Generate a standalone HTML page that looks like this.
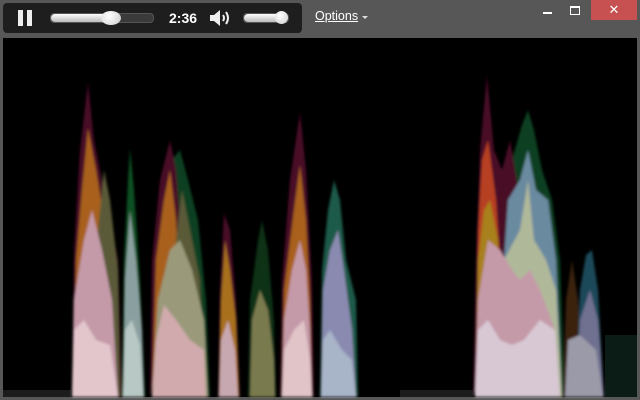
<!DOCTYPE html>
<html><head><style>
body{margin:0;width:640px;height:400px;background:#575757;overflow:hidden;font-family:"Liberation Sans",sans-serif;position:relative}
.bar{position:absolute;left:3px;top:3px;width:299px;height:30px;background:#1e1e1e;border-radius:4px}
.vid{position:absolute;left:3px;top:38px;width:634px;height:359px;background:#000}
.track{position:absolute;height:8px;border-radius:4px;background:#3a3a3a;border:1px solid #555}
.fill{position:absolute;left:0;top:0;height:8px;border-radius:4px;background:linear-gradient(#fff,#bbb)}
.thumb{position:absolute;border-radius:50%;background:radial-gradient(circle at 40% 35%,#fff,#ccc)}
</style></head><body>
<div class="bar">
 <div style="position:absolute;left:15px;top:7px;width:5px;height:16px;background:#eee"></div>
 <div style="position:absolute;left:24px;top:7px;width:5px;height:16px;background:#eee"></div>
 <div class="track" style="left:47px;top:10px;width:102px"><div class="fill" style="width:62px"></div></div>
 <div class="thumb" style="left:98px;top:8px;width:20px;height:14px"></div>
 <div style="position:absolute;left:166px;top:7px;color:#fff;font-weight:bold;font-size:14px">2:36</div>
 <svg style="position:absolute;left:205px;top:5px" width="26" height="20" viewBox="0 0 26 20">
  <path d="M2 7h4l6-5v16l-6-5H2z" fill="#eee"/>
  <path d="M15 7q2 3 0 6M18 4q4 6 0 12" stroke="#eee" stroke-width="2" fill="none"/>
 </svg>
 <div class="track" style="left:240px;top:10px;width:44px"><div class="fill" style="width:44px"></div></div>
 <div class="thumb" style="left:272px;top:8px;width:13px;height:13px"></div>
</div>
<div style="position:absolute;left:315px;top:9px;color:#fff;font-size:12.5px;text-decoration:underline">Options</div>
<div style="position:absolute;left:362px;top:16px;border:3px solid transparent;border-top:3px solid #ddd;border-bottom:0"></div>
<div style="position:absolute;left:543px;top:12px;width:9px;height:2px;background:#fff"></div>
<div style="position:absolute;left:570px;top:6px;width:8px;height:6px;border:1px solid #fff;border-top-width:2px"></div>
<div style="position:absolute;left:591px;top:0;width:46px;height:20px;background:#c75050;color:#fff;font-size:13px;text-align:center;line-height:20px">✕</div>
<div class="vid"></div>
<svg style="position:absolute;left:0;top:0" width="640" height="400">
 <defs><filter id="b"><feGaussianBlur stdDeviation="1.2"/></filter></defs>
 <rect x="3" y="390" width="68" height="7" fill="#1c1c1c"/>
 <rect x="400" y="390" width="73" height="7" fill="#1c1c1c"/>
 <rect x="605" y="335" width="32" height="62" fill="#0b1c16"/>
 <g filter="url(#b)">
 <!-- spike1 -->
 <polygon fill="#4a0828" points="72,397 74,250 80,150 88,82 94,140 104,190 118,260 122,397"/>
 <polygon fill="#a8601e" points="74,397 76,260 82,190 88,128 96,170 106,230 118,300 120,397"/>
 <polygon fill="#5a5a38" points="96,397 98,230 104,170 110,200 118,270 120,397"/>
 <polygon fill="#c49aa8" points="72,397 74,300 84,240 92,210 102,250 112,300 118,397"/>
 <polygon fill="#e2c6cc" points="72,397 74,330 84,320 96,340 110,345 118,397"/>
 <!-- spike2 -->
 <polygon fill="#0a5020" points="122,397 124,260 128,180 130,148 134,190 140,280 145,397"/>
 <polygon fill="#8aa0a0" points="123,397 125,280 130,210 136,260 142,330 144,397"/>
 <polygon fill="#b8c8c4" points="123,397 125,330 132,320 140,345 143,397"/>
 <!-- spike3 -->
 <polygon fill="#0a4020" points="165,300 172,160 180,150 188,180 198,220 206,300 210,397 160,397"/>
 <polygon fill="#4a0828" points="150,397 152,260 160,180 170,140 176,170 180,220 170,300"/>
 <polygon fill="#a8601e" points="152,397 156,260 164,200 170,170 176,220 180,300"/>
 <polygon fill="#5a5a38" points="174,397 176,240 182,190 190,230 200,280 204,397"/>
 <polygon fill="#9a9a7a" points="152,397 158,300 170,250 180,240 192,270 204,320 208,397"/>
 <polygon fill="#d0aaac" points="152,397 156,340 164,305 176,320 190,340 204,350 206,397"/>
 <!-- spike4 -->
 <polygon fill="#4a0828" points="218,397 220,290 224,213 230,230 236,300 240,397"/>
 <polygon fill="#a8701e" points="219,397 221,300 225,240 230,270 236,320 239,397"/>
 <polygon fill="#c8a8b0" points="219,397 221,340 228,320 235,350 238,397"/>
 <!-- spike5 -->
 <polygon fill="#0a3018" points="248,397 250,300 258,240 262,220 268,250 274,320 276,397"/>
 <polygon fill="#7a7a50" points="250,397 252,320 260,290 268,310 274,360 275,397"/>
 <!-- spike6 -->
 <polygon fill="#4a0828" points="280,397 282,280 290,180 300,112 306,170 312,280 314,397"/>
 <polygon fill="#a8601e" points="282,397 284,290 294,210 300,165 306,220 310,300 312,397"/>
 <polygon fill="#c49aa8" points="282,397 284,320 292,270 300,240 306,270 310,330 312,397"/>
 <polygon fill="#e0c4c8" points="282,397 284,350 294,330 304,320 310,360 312,397"/>
 <!-- spike7 -->
 <polygon fill="#1a5a48" points="320,397 322,270 328,210 334,180 340,200 346,260 356,300 358,397"/>
 <polygon fill="#8a8ab0" points="321,397 323,290 330,250 338,230 344,270 352,330 356,397"/>
 <polygon fill="#a8b4c8" points="321,397 323,340 330,330 342,350 352,360 356,397"/>
 <!-- spike8 -->
 <polygon fill="#0a4020" points="500,300 512,160 522,125 528,110 534,130 542,170 552,200 560,260 565,397 500,397"/>
 <polygon fill="#4a0828" points="473,397 476,260 480,150 487,75 494,150 502,170 510,140 520,200 505,300"/>
 <polygon fill="#b84020" points="476,397 478,230 482,160 488,140 496,200 500,260"/>
 <polygon fill="#a8801e" points="476,397 478,260 484,210 490,200 498,240 500,300"/>
 <polygon fill="#6a8aa0" points="500,320 508,200 520,180 528,150 536,190 548,200 556,260 562,397 500,397"/>
 <polygon fill="#b0b89a" points="500,397 504,260 520,230 528,180 534,240 546,260 556,290 562,397"/>
 <polygon fill="#c49aa8" points="475,397 478,300 488,240 500,250 512,270 520,280 530,270 540,290 555,330 560,397"/>
 <polygon fill="#d8c8d4" points="475,397 478,330 488,320 500,340 512,345 524,340 540,320 555,330 560,397"/>
 <!-- spike9 -->
 <polygon fill="#3a2010" points="563,397 566,300 572,260 578,300 585,397"/>
 <polygon fill="#1a4a5a" points="576,397 580,290 586,255 592,250 598,290 604,397"/>
 <polygon fill="#707090" points="576,397 580,320 590,290 598,320 604,397"/>
 <polygon fill="#9a9aa8" points="565,397 568,340 580,335 596,350 603,397"/>
 </g>
</svg>
</body></html>
